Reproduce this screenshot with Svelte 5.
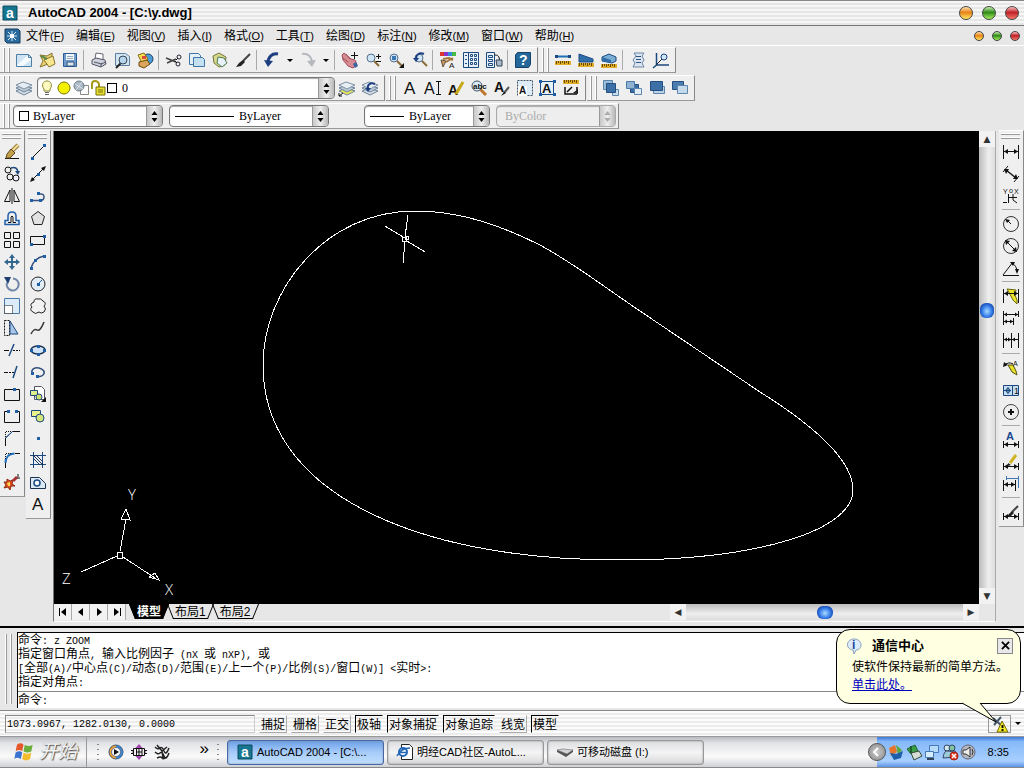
<script lang="ts">
  const l = (d: string, c = '#111', w = 1) => `<path d="${d}" fill="none" stroke="${c}" stroke-width="${w}"/>`;
  const f = (d: string, c: string, s = 'none') => `<path d="${d}" fill="${c}" stroke="${s}"/>`;
  const o = (x: number, y: number, r: number, c = 'none', s = '#111', w = 1) =>
    `<circle cx="${x}" cy="${y}" r="${r}" fill="${c}" stroke="${s}" stroke-width="${w}"/>`;
  const t = (x: number, y: number, size: number, s: string, c = '#111', w = 'normal') =>
    `<text x="${x}" y="${y}" font-size="${size}" font-weight="${w}" fill="${c}" font-family="Liberation Sans, sans-serif">${s}</text>`;

  const ink = '#1c4a80';
  const node = '#1f5fa8';
  const arrowsH = (y: number) => l(`M1 ${y}.5H15`) + f(`M1 ${y}.5l4-2.5v5zM15 ${y}.5l-4-2.5v5z`, '#111');
  const dots = (...pts: number[][]) => pts.map(([x, y]) => `<rect x="${x - 1}" y="${y - 1}" width="3" height="3" fill="${node}"/>`).join('');
  const lens = (x: number, y: number) =>
    l(`M${x + 3} ${y + 3}l5 5`, '#8a6a35', 2) + o(x, y, 4, '#cfe4f4', '#54708c');
  const ruler = (y: number) =>
    f(`M0 ${y}h16v4h-16z`, '#e0ae28') + l(`M1.5 ${y}v3M3.5 ${y}v2M5.5 ${y}v3M7.5 ${y}v2M9.5 ${y}v3M11.5 ${y}v2M13.5 ${y}v3`, '#6b4a00');
  const sheets = (c: string) => f('M0 11l7-3 9 3-8 4z', c, '#6d8296') + f('M0 8l7-3 9 3-8 4z', '#bccbd8', '#6d8296') + f('M0 5l7-3 9 3-8 4z', '#e6edf3', '#7b90a4');

  const icons: Record<string, string> = {
    new: f('M0.5 2.5h12l3 3v9h-15z', '#cfe3f2', '#4d7ea6') + f('M1 13L12 3v3h3v2L7 14H1z', '#f4fafd') + l('M12.5 2.5v3h3', '#4d7ea6'),
    open: f('M1 3l7 1 5-3v4l-4 7-8 3 3-6z', '#e8d070', '#8a7430') + f('M5 8l9-4 2 8-6 3z', '#f6e690', '#8a7430') + l('M2 4l6 3', '#5c8a48', 2),
    save: f('M1.5 1.5h13v13h-13z', '#6f9ccc', '#2f5c92') + f('M4 2h8v6H4z', '#f2f6fa') + f('M5 10h7v4H5z', '#dfe8f0', '#31557e') + l('M5 4.5h6M5 6.5h6', '#9ab'),
    print: f('M5 1l7 1v6l-8-1z', '#fff', '#667') + f('M1 8l4-2 9 2 1 4-5 3-9-3z', '#cdd2dc', '#556') + l('M3 10l8 2M10 15v-3l5-2', '#556'),
    preview: f('M1.5 1.5h10l4 3v9h-14z', '#d4e5f2', '#5d7f9e') + l('M7 11l-5 5', '#222', 2) + o(9, 8, 4, '#b6d6ee', '#345'),
    publish: o(11, 7, 5, '#4a9bd8', '#246') + f('M1 3l6-2 4 6-6 4z', '#f7df52', '#8a6a10') + f('M2 10l8-2 3 4-6 4-5-2z', '#dba65a', '#6c4a10') + f('M5 4h4v3H5z', '#d44'),
    cut: l('M0 6l10 4M1 11l9-4', '#444', 1.5) + o(13, 5, 2, 'none', '#223') + o(12, 12, 2, 'none', '#223') + l('M10 8l2-2M9 9l2 2'),
    copy: f('M0.5 1.5h9l2 2v9h-11z', '#e4f0f8', '#3f76a4') + f('M4.5 5.5h9l2 2v7h-11z', '#c4dff0', '#3f76a4'),
    paste: f('M1 4l6-3 7 4-1 8-6 2-5-4z', '#d8d88c', '#75753c') + f('M6 5l6 1 3 5-5 4-5-4z', '#e8f2fa', '#4f7d52'),
    brush: l('M15 2L8 9', '#444', 2) + f('M8 8l2 2-4 4-5 1 3-4z', '#222'),
    undo: l('M14 2C8 1 4 5 4 11', '#1d3f80', 3) + f('M0 8l4 7 5-6z', '#1d3f80'),
    redo: l('M2 2c6-1 10 3 10 9', '#b5b8bc', 2) + f('M16 8l-4 7-5-6z', '#b5b8bc'),
    pan: f('M0 3l2-2 7 6 4 1 2 5-4 3-5-2-5-6z', '#d58c92', '#a04f5c') + l('M4 2l4 5M1 6l5 4', '#a04f5c') + f('M11 12l3-2 2 4-3 2z', '#3763a0') + l('M12.5 0v7M9 3.5h7'),
    zoomrt: lens(6, 6) + l('M11 4.5h5M13.5 2v5M11 9.5h5'),
    zoomwin: lens(6, 6) + f('M4 4h4v4H4z', '#3c79b4') + f('M16 11v5h-5z', '#111'),
    zoomprev: lens(8, 6) + l('M13 2C8 0 5 3 5 7', '#1d3f80', 2) + f('M2 6h6l-3 4z', '#1d3f80'),
    props: f('M0 0h4v4H0z', '#d33') + f('M4 0h4v4H4z', '#83c') + f('M8 0h4v4H8z', '#38d') + f('M12 0h4v4h-4z', '#4b4') + l('M3 7l6-1 4 2M6 10l7-4', '#a5763a', 2) + f('M1 8l5 1-3 6z', '#c89a60', '#654') + t(9, 16, 8, 'A'),
    designcenter: f('M0.5 0.5h15v15h-15z', '#e8f1f9', ink) + l('M5.5 1v14', ink) + l('M2 3.5h2M2 7.5h2M2 11.5h2', ink) + l('M7.5 2.5h2v2h-2zM11.5 2.5h2v2h-2zM7.5 6.5h2v2h-2zM11.5 6.5h2v2h-2zM7.5 10.5h2v2h-2zM11.5 10.5h2v2h-2z', ink),
    palettes: f('M0.5 0.5h8v15h-8z', '#e8f1f9', ink) + l('M2.5 3.5h4v2h-4zM2.5 7.5h4v2h-4zM2.5 11.5h4v2h-4z', ink) + l('M9 3c4 0 5 3 4 7') + f('M10 8h6v6h-5z', '#aabaca', '#345'),
    help: f('M0.5 3l2-2.5h13v12l-2 3h-13z', '#24679b', '#164168') + t(4, 13, 14, '?', '#fff', 'bold'),
    dist: l('M1 4.5h14', '#1f6fb8', 2) + f('M0 3h3v3H0zM13 3h3v3h-3z', '#1c4a80') + ruler(9),
    area: f('M1 2l14 5v3H1z', '#2f6ea8', '#1c4a80') + ruler(11),
    mass: f('M1 5l7-3 7 3v4l-4 2L1 9z', '#79add6', '#1c4a80') + f('M1 5l9 3v3L1 9z', '#2f6ea8') + ruler(12),
    list: f('M4 1h10l-2 3 2 4-2 3 2 4H3l2-4-2-3 3-4z', '#dbe6f2', '#6b86a6') + l('M6 4.5h5M6 7.5h5M6 10.5h5', '#31557e'),
    locate: l('M3.5 1v12H16M3.5 13L0 16', '#1c4a80', 1.5) + l('M3 13L9 7', '#222') + o(11, 5, 3, '#cfe4f4', '#1c4a80'),
    layers: sheets('#d6e0e9'),
    layercur: sheets('#ecec50') + l('M0 16l4-3M0 16v-3M0 16h3'),
    layerprev: sheets('#d6e0e9') + l('M13 4c-5-2-8 1-7 5', '#1d3f80', 2) + f('M3 8h6l-3 4z', '#1d3f80'),
    bulb: f('M5 9C2 5 4 1 8 1s6 4 3 8v2H5z', '#fffac0', '#8a8630') + l('M6 12.5h4M6 14.5h4', '#666'),
    sun: o(8, 8, 6, '#f4f000', '#77770c'),
    freeze: f('M7.5 5.5h8v9h-8z', '#fff', '#888') + o(6, 6, 5, '#a9b9c4', '#6c7c88') + l('M2 4l8 5M9 2l-6 8', '#dde'),
    lock: l('M2 9V4q0-3 3-3t4 3v3', '#a59c18', 2) + f('M6 7h9v8H6z', '#e8e030', '#77700c') + l('M8 10h5M8 12h5', '#77700c'),
    mtext: t(2, 14, 17, 'A'),
    dtext: t(-1, 14, 16, 'A') + l('M11 1.5h5M11 14.5h5M13.5 2v12'),
    edittext: t(0, 15, 14, 'A', '#111', 'bold') + l('M15 2L8 14', '#c8a818', 3),
    findtext: l('M9 9l6 6', '#c0752c', 3) + o(6, 6, 5, '#d8ebf8', '#456') + t(2, 9, 8, 'abc', '#111', 'bold'),
    textstyle: t(0, 12, 14, 'A', '#111', 'bold') + l('M15 7l-5 6', '#555', 2) + f('M7 16l3-4 2 1z', '#111'),
    scaletext: '<rect x="0.5" y="0.5" width="15" height="15" fill="#dcebf6" stroke="#456" stroke-dasharray="2 1"/>' + f('M1 6h9v10H1z', '#fff') + t(2, 14, 10, 'A', '#111', 'bold'),
    justify: f('M0.5 1.5h13v13h-13z', '#e6f1fa', ink) + t(2, 13, 13, 'A', '#111', 'bold') + dots([0, 1], [14, 1], [0, 14], [14, 14]),
    spacetrans: ruler(0) + l('M2 7v7h12M4 12l5-5M14 7v5', '#111', 1.5) + f('M10 13l5-4v5z', '#222'),
    front: f('M0.5 0.5h9v9h-9z', '#9cbbd6', '#5d86ac') + f('M9.5 9.5h6v6h-6z', '#c9dcec', '#5d86ac') + f('M3.5 3.5h9v9h-9z', '#3d70a6', '#254f80'),
    back: f('M4.5 4.5h8v8h-8z', '#3d70a6', '#254f80') + f('M0.5 1.5h8v7h-8z', '#8fb2d2', '#4a7aa8') + f('M8.5 8.5h7v6h-7z', '#e2edf5', '#5d86ac'),
    above: f('M4.5 6.5h11v7h-11z', '#bcd2e6', '#5d86ac') + f('M1.5 1.5h12v9h-12z', '#3d70a6', '#254f80'),
    under: f('M0.5 1.5h11v8h-11z', '#4b7caf', '#254f80') + f('M5.5 5.5h10v8h-10z', '#c5dbec', '#5d86ac'),
    erase: l('M1 14.5h14') + l('M14 1L8 7', '#9a7a30', 4) + l('M14 1L8 7', '#eee0a0', 2) + f('M7 5l4 4-5 5H2l1-4z', '#c3a048', '#5c4820'),
    copyobj: o(4, 4, 3) + o(6, 11, 3) + o(12, 12, 3, '#eef') + l('M7 2q6-2 7 4', '#1c4a80', 1.5) + f('M11 5h5l-2 4z', '#1c4a80'),
    mirror: l('M8 0v16') + l('M6 2v11.5H0.5zM10 2v11.5h5.5z'),
    offset: l('M1 14.5h14v-4h-3V6q0-4-4-4T4 6v4.5H1z', '#1f5fa8', 1.5) + l('M4 12.5h3V7q1-2 2 0v5.5h3', '#111'),
    array: l('M0.5 0.5h6v6h-6zM9.5 0.5h6v6h-6zM0.5 9.5h6v6h-6zM9.5 9.5h6v6h-6z'),
    move: l('M8 2v12M2 8h12', '#35688f', 2) + f('M8 0l3 4H5zM8 16l3-4H5zM0 8l4-3v6zM16 8l-4-3v6z', '#35688f'),
    rotate: l('M9 2.5a6 6 0 1 1-6 4', '#6f86a8', 2) + f('M0 1l7 0-3 7z', '#1c3f70'),
    scale: f('M0.5 0.5h15v15h-15z', '#dcebf8', '#4a7aa8') + '<rect x="0.5" y="7.5" width="8" height="8" fill="#fff" stroke="#111" stroke-dasharray="1 1"/>',
    stretch: '<path d="M0.5 0.5h5v15h-5z" fill="#eee" stroke="#111" stroke-dasharray="2 1"/>' + f('M6 1l8 13H6z', '#a8c6e6', '#1c4a80'),
    trim: l('M0 8.5h5', '#111') + l('M10 2L5 14', '#1c4a80', 1.5) + '<path d="M9 8.5h7" stroke="#111" stroke-dasharray="2 1"/>',
    extend: l('M13 2L9 14', '#1c4a80', 1.5) + l('M0 8.5h4') + '<path d="M5 8.5h6" stroke="#111" stroke-dasharray="2 1"/>',
    breakpt: f('M0.5 3.5h15v11h-15z', '#ececec', '#111') + dots([10, 3]),
    break: l('M4 3.5H0.5v11h15v-11H12') + dots([4, 3], [12, 3]),
    chamfer: l('M1.5 16V8l7-6.5H16') + '<path d="M1.5 7V1.5H7" fill="none" stroke="#111" stroke-dasharray="1 1"/>' + l('M1.5 8l7-6.5', '#1f5fa8'),
    fillet: l('M1.5 16v-5M11 1.5h5') + l('M1.5 11q0-9 9-9.5', '#1f6fc0', 2) + '<path d="M1.5 7V1.5H7" fill="none" stroke="#111" stroke-dasharray="1 1"/>',
    explode: f('M0 8l3 0 0-3 3 2 3-1-1 4 3 2-4 0-1 4-2-3-4 1 2-3z', '#e04a20', '#8a2c10') + f('M3 9l3-1 0 4-2 0z', '#f9d84a') + l('M9 7l4-4', '#a33', 3) + l('M14 0v3M16 4h-3'),
    line: l('M2 14L14 2', '#111') + dots([2, 14], [14, 1]),
    xline: l('M1 15L15 1') + f('M0 16l2-5 3 3zM16 0l-2 5-3-3z', '#111') + dots([8, 8]),
    pline: l('M1 12.5h9q4 0 4-3.5t-4-3', '#35507c', 1.5) + dots([1, 12], [10, 12], [8, 5]),
    polygon: f('M8 1.5l6.5 5-2.5 8H4l-2.5-8z', '#e2e2e2', '#222'),
    rect: f('M0.5 4.5h14v8h-14z', '#eee', '#111') + dots([14, 4], [1, 12]),
    arc: l('M1 14Q4 4 14 2', '#35507c', 1.5) + dots([1, 14], [5, 6], [14, 2]),
    circle: o(8, 8, 7, '#e2edf6', '#222') + l('M8 8l4-4', '#1f5fa8') + dots([8, 8]),
    cloud: f('M4 4q0-4 4-3 3-1 5 2 4 2 1 5 3 3 0 6-3 2-5 0-4 3-6 0-4-2-1-5-3-3 2-5z', '#f2f2f2', '#222'),
    spline: l('M1 14q3-6 6-4t7-8', '#333', 1.5),
    ellipse: `<ellipse cx="8" cy="8" rx="7" ry="4" fill="#cfe3f4" stroke="#1c3350" stroke-width="1.5"/>` + dots([8, 4], [1, 8], [14, 8], [8, 12]),
    earc: l('M2 9C1 5 5 3 9 4s7 4 4 7-5 1-6 1', '#35507c', 1.5) + dots([2, 9], [7, 12]),
    insert: f('M4.5 0.5h7l3 3v10h-10z', '#fff', '#556') + f('M0.5 4.5h7v5h-7z', '#dff08a', '#1c4a80') + o(9, 11, 3, '#cfe26a', '#1c4a80') + f('M16 11v5h-5z', '#111'),
    block: f('M1.5 2.5h9v6h-9z', '#e9f08c', '#1c4a80') + o(10, 10, 4, '#d4e67a', '#1c4a80'),
    point: dots([8, 8]),
    hatch: f('M3 3h10v10H3z', '#e8eef4') + l('M3.5 0v16M12.5 0v16M0 3.5h16M0 12.5h16', '#1c4a80') + l('M3 6l7 7M3 3l10 10M6 3l7 7', '#1c3350'),
    region: f('M0.5 3.5h9l6 6v5h-15z', '#dbe9f5', '#1c3350') + o(7, 9, 3, '#f6fafd', '#1c4a80', 1.5),
    dimlin: l('M0.5 1v14M15.5 1v14') + arrowsH(7),
    dimali: l('M3 4l10 8', '#111', 1.5) + f('M1 3h5l-3 5zM15 13h-5l3-5z', '#111') + l('M0 6l5-6M11 16l5-6'),
    dimord: t(0, 6, 7, 'Y') + t(6, 5, 7, 'o') + t(11, 6, 7, 'X') + l('M5.5 6v9M5 9.5h9M10 6v6l4 3M0 14.5h4'),
    dimrad: o(8, 8, 7.5, 'none', '#333') + l('M8 8L4 4') + f('M2 3l5 1-3 3z', '#111'),
    dimdia: o(8, 8, 7.5, 'none', '#333') + l('M3 3l10 10') + f('M2 2l5 1-4 4zM14 14l-5-1 4-4z', '#111'),
    dimang: l('M0 15.5h16M0 15L10 2', '#111') + l('M9 3q5 3 5 9') + f('M7 2h5l-2 4zM12 9h4l-2 5z', '#111'),
    qdim: f('M4 1l9 1-1 5 2 5 0 4-4-4z', '#ece428', '#66640c') + l('M0.5 1v14M15.5 1v14') + arrowsH(5),
    dimbase: l('M0.5 1v14M10.5 8v7M15.5 1v6') + l('M1 4.5h14M1 11.5h9') + f('M1 4.5l3-2v4zM15 4.5l-3-2v4zM1 11.5l3-2v4zM10 11.5l-3-2v4z', '#111'),
    dimcont: l('M0.5 1v15M8.5 1v15M15.5 1v15M1 7.5h14') + f('M1 7.5l3-2v4zM8 7.5l-3-2v4zM9 7.5l3-2v4z', '#111'),
    leader: l('M1 6q4-5 9-2') + f('M0 7l1-5 4 3z', '#111') + f('M5 5h5l3 6 1 4-5-3z', '#e6de28', '#555310') + t(10, 6, 7, 'A'),
    tol: f('M0.5 3.5h15v10h-15z', '#c7def2', ink) + l('M9.5 4v9M5 5v7M1 8.5h7', ink) + o(5, 8.5, 2, 'none', ink) + t(11, 12, 9, '1'),
    center: o(8, 8, 7.5, 'none', '#444') + l('M8 5v6M5 8h6', '#111', 2),
    dimedit: t(3, 8, 11, 'A', '#1c4a90', 'bold') + l('M0.5 9v7M15.5 9v7') + arrowsH(12),
    dimtedit: l('M0.5 9v7M15.5 9v7') + arrowsH(12) + l('M13 1L7 9', '#d0b428', 3) + f('M5 9l3 2-3 1z', '#222'),
    dimupd: l('M0.5 4v11M12.5 4v11') + l('M3 2.5h12M3.5 0v4M15.5 0v12', '#3a78b8') + l('M1 8.5h11') + f('M1 8.5l4-2.5v5zM12 8.5l-4-2.5v5z', '#111'),
    dimstyle: l('M0.5 9v7M15.5 9v7') + arrowsH(12) + l('M15 2L9 8', '#444', 2) + f('M9 7l2 2-4 4-3-1z', '#222'),
    adlogo: f('M1 1h14v14H1z', '#16758f', '#0b4a5c') + t(4, 13, 14, 'a', '#fff', 'bold'),
    dwg: f('M1 1h13l2 2v12H3l-2-2z', '#2a6a9c', '#123c60') + l('M8 3v10M3 8h10M4 4l2 2M12 4l-2 2M4 12l2-2M12 12l-2-2', '#d4ecfa') + f('M6 6h4v4H6z', '#fff'),
    windows: f('M3 2q3-2 5 0L7 7Q5 5 2 7z', '#e2582c') + f('M9 2q3 2 6 0l-1 5q-3 2-6 0z', '#6cae3c') + f('M2 8q3-2 5 0l-1 5q-3-2-5 0z', '#3a72d0') + f('M8 8q3 2 6 0l-1 5q-3 2-6 0z', '#f2bc2c'),
    player: o(8, 8, 7, '#f0a030', '#456') + f('M8 1a7 7 0 0 1 0 14z', '#3a80c8') + o(8, 8, 4.5, '#f6f9fc', '#679') + f('M6 5l5 3-5 3z', '#111'),
    chip: f('M8 0l7 8-7 8-7-8z', '#a045b0') + f('M2.5 4.5h11v7h-11z', '#f4eef4', '#111') + l('M0 6.5h3M0 9.5h3M13 6.5h3M13 9.5h3M5 8h6') + l('M5.5 5v6M8 5v6M11 5v6'),
    snake: l('M1 3q3 3 5 1t4 3 5-3M1 8q3 3 5 1t4 3 5-3M3 14q4-2 5 0t6-2M3 1l5 6 1 7M13 3l-5 4', '#222', 1.5),
    ie: f('M4.5 0.5h8l3 3v12h-11z', '#fff', '#222') + o(6, 8, 4, '#fff', '#2468b8', 2) + l('M2 8.5h8M0 12Q4 4 13 4', '#2468b8', 1.5),
    disk: f('M0 6l6-1 10 1-6 4z', '#d4d4d4', '#999') + f('M0 6l10 4 6-4v2l-7 5L0 8z', '#555'),
    tray1: f('M1 4l6-3 2 7-6 4z', '#e8742c') + f('M8 1l6 5-4 5z', '#5aa83c') + f('M2 9l6 1 7-3-2 7-7 2z', '#1f5fa8'),
    tray2: f('M1 5l8-4 3 6-7 3z', '#3aa048', '#1c6030') + f('M5 9l8-2 3 5-8 4z', '#d6dcd6', '#354a38') + l('M5 2v7', '#1c6030', 2),
    tray3: f('M5.5 1.5h9v7h-9z', '#b6dcfa', '#4478b8') + f('M1.5 7.5h8v6h-8z', '#d4ecfc', '#4478b8') + l('M3 15h7', '#345', 2),
    tray4: o(5, 4, 3, '#cfe8ee', '#346') + o(10, 4, 3, '#7fc49c', '#346') + f('M1 14q1-8 5-7t6 0 3 6z', '#9ccbd8', '#346') + o(12, 12, 4, '#e03c28', '#a02010') + l('M10 10l4 4M14 10l-4 4', '#fff', 1.5),
    tray5: o(8, 8, 7, '#b4b8c0', '#667') + f('M3 6h3l4-3v10l-4-3H3z', '#eee', '#333') + l('M12 5q2 3 0 6', '#333'),
    satellite: l('M1 2l9 8M9 1L2 9', '#456', 2) + f('M10 5l6 11H5z', '#f6ec28', '#776c08') + l('M10.5 9v3M10.5 13v2', '#111', 2),
    info: f('M8 1c9 0 9 11 2 11l-2 4-1-4C-1 11 0 1 8 1z', '#dcebfa', '#8aa0bc') + t(6, 11, 12, 'i', '#1644a0', 'bold')
  };

  const menus = [
    ['文件', 'F'], ['编辑', 'E'], ['视图', 'V'], ['插入', 'I'], ['格式', 'O'], ['工具', 'T'],
    ['绘图', 'D'], ['标注', 'N'], ['修改', 'M'], ['窗口', 'W'], ['帮助', 'H']
  ];

  // '|' is a separator, 'v' the small drop-down arrow
  const standard = 'new open save | print preview publish | cut copy paste brush | undo v redo v | pan zoomrt zoomwin zoomprev | props designcenter palettes | help'.split(' ');
  const inquiry = 'dist area mass | list locate'.split(' ');
  const text = 'mtext dtext edittext findtext textstyle scaletext justify spacetrans'.split(' ');
  const order = 'front back above under'.split(' ');
  const modify = 'erase copyobj mirror offset array move rotate scale stretch trim extend breakpt break chamfer fillet explode'.split(' ');
  const draw = 'line xline pline polygon rect arc circle cloud spline ellipse earc insert block point hatch region mtext'.split(' ');
  const dimension = 'dimlin dimali dimord | dimrad dimdia dimang | qdim dimbase dimcont | leader tol center | dimedit dimtedit dimupd | dimstyle'.split(' ');

  const history = [
    '命令: z ZOOM',
    '指定窗口角点, 输入比例因子 (nX 或 nXP), 或',
    '[全部(A)/中心点(C)/动态(D)/范围(E)/上一个(P)/比例(S)/窗口(W)] <实时>:',
    '指定对角点:'
  ];

  let modes = $state([
    { name: '捕捉', on: false },
    { name: '栅格', on: false },
    { name: '正交', on: false },
    { name: '极轴', on: true },
    { name: '对象捕捉', on: true },
    { name: '对象追踪', on: true },
    { name: '线宽', on: false },
    { name: '模型', on: true }
  ]);

  const tasks = [
    { icon: 'adlogo', title: 'AutoCAD 2004 - [C:\\...', active: true },
    { icon: 'ie', title: '明经CAD社区-AutoL...', active: false },
    { icon: 'disk', title: '可移动磁盘 (I:)', active: false }
  ];

  let balloon = $state(true);
  let command = $state('');

  // split into runs so that latin text takes half the width of a hanzi
  const runs = (s: string) => s.match(/[\x20-\x7e]+|[^\x20-\x7e]+/g) ?? [];
</script>

{#snippet icon(name: string)}
  <svg class="icon" viewBox="0 0 16 16" aria-hidden="true">{@html icons[name]}</svg>
{/snippet}

{#snippet tools(items: string[])}
  {#each items as item}
    {#if item === '|'}
      <span class="sep"></span>
    {:else if item === 'v'}
      <button class="drop" aria-label="more"><i></i></button>
    {:else}
      <button class="tool" aria-label={item}>{@render icon(item)}</button>
    {/if}
  {/each}
{/snippet}

{#snippet spin()}
  <svg class="spin" viewBox="0 0 15 20" aria-hidden="true">
    <path d="M7.5 5l3 4h-6zM7.5 16l3-4h-6z" fill="currentColor" />
  </svg>
{/snippet}

{#snippet mixed(s: string)}{#each runs(s) as run}<span class:latin={/^[\x20-\x7e]/.test(run)}>{run}</span>{/each}{/snippet}

<div class="desktop">
  <header class="title">
    {@render icon('adlogo')}
    <h1>AutoCAD 2004 - [C:\y.dwg]</h1>
    <div class="lights">
      <button class="amber" aria-label="minimize"></button>
      <button class="green" aria-label="maximize"></button>
      <button class="red" aria-label="close"></button>
    </div>
  </header>

  <nav class="menubar">
    {@render icon('dwg')}
    {#each menus as [name, key]}
      <button>{name}<span>(<u>{key}</u>)</span></button>
    {/each}
    <div class="lights small">
      <button class="amber" aria-label="minimize"></button>
      <button class="green" aria-label="restore"></button>
      <button class="red" aria-label="close"></button>
    </div>
  </nav>

  <div class="row">
    <div class="bar">{@render tools(standard)}</div>
    <div class="bar">{@render tools(inquiry)}</div>
  </div>
  <div class="row">
    <div class="bar">
      {@render tools(['layers'])}
      <label class="combo layer">
        {@render icon('bulb')}{@render icon('sun')}{@render icon('freeze')}{@render icon('lock')}
        <span class="swatch"></span>
        <select aria-label="layer"><option>0</option></select>
        {@render spin()}
      </label>
      {@render tools(['layercur', 'layerprev'])}
    </div>
    <div class="bar">{@render tools(text)}</div>
    <div class="bar">{@render tools(order)}</div>
  </div>
  <div class="row">
    <div class="bar properties">
      <label class="combo color">
        <span class="swatch"></span>
        <select aria-label="color"><option>ByLayer</option></select>
        {@render spin()}
      </label>
      <label class="combo linetype">
        <span class="sample"></span>
        <select aria-label="linetype"><option>ByLayer</option></select>
        {@render spin()}
      </label>
      <label class="combo weight">
        <span class="sample"></span>
        <select aria-label="lineweight"><option>ByLayer</option></select>
        {@render spin()}
      </label>
      <label class="combo plot">
        <select aria-label="plot style" disabled><option>ByColor</option></select>
        {@render spin()}
      </label>
    </div>
  </div>

  <main>
    <div class="bar side">{@render tools(modify)}</div>
    <div class="bar side">{@render tools(draw)}</div>

    <div class="view">
      <div class="upper">
        <svg class="drawing" viewBox="54 131 925 473" role="img" aria-label="drawing">
          <g fill="none" stroke="#fff">
            <path d="M415 211C325 211 263 290 263 365C263 490 410 560 620 560C760 560 853 530 853 490C853 455 800 417 760 392L640 311C600 284 575 264 540 245C500 225 460 211 415 211z" />
            <path d="M408 215L405 237M385 226l18 11M407 241l18 11M405 242l-2 21M402.5 237.5h4v4h-4zM405.5 236.5h3v3h-3z" />
            <path d="M120 551l6-32M117 556l-36 16M123 557l32 21M117.5 552.5h5v6h-5zM126 509l-5 10 9 1zM159 580l-4-7-6 4z" />
          </g>
          <g class="axes">
            <text x="128" y="500">Y</text>
            <text x="165" y="595">X</text>
            <text x="62" y="584">Z</text>
          </g>
        </svg>
        <div class="scroll vertical">
          <button aria-label="up">▲</button>
          <span class="track"></span>
          <i class="thumb"></i>
          <span class="track rest"></span>
          <button aria-label="down">▼</button>
        </div>
      </div>
      <div class="lower">
        <div class="steps">
          <button aria-label="first"><svg viewBox="0 0 10 10"><path d="M1 1h1v8H1zM8 1v8L3 5z" /></svg></button>
          <button aria-label="previous"><svg viewBox="0 0 10 10"><path d="M7 1v8L2 5z" /></svg></button>
          <button aria-label="next"><svg viewBox="0 0 10 10"><path d="M3 1v8l5-4z" /></svg></button>
          <button aria-label="last"><svg viewBox="0 0 10 10"><path d="M8 1h1v8H8zM2 1v8l5-4z" /></svg></button>
        </div>
        <div class="tabs">
          <button class="current">模型</button>
          <button>布局1</button>
          <button>布局2</button>
        </div>
        <div class="scroll horizontal">
          <button aria-label="left">◀</button>
          <span class="track"></span>
          <i class="thumb"></i>
          <span class="track"></span>
          <button aria-label="right">▶</button>
        </div>
      </div>
    </div>

    <div class="bar side right">{@render tools(dimension)}</div>
  </main>

  <section class="command">
    <div class="console">
      <div class="log">
        {#each history as entry}
          <p>{@render mixed(entry)}</p>
        {/each}
      </div>
      <label class="prompt">
        <span>{@render mixed('命令:')}</span>
        <input bind:value={command} />
      </label>
    </div>
  </section>

  <footer class="status">
    <output>1073.0967, 1282.0130, 0.0000</output>
    {#each modes as mode}
      <button class:on={mode.on} onclick={() => (mode.on = !mode.on)}>{mode.name}</button>
    {/each}
    <div class="comm">
      <button class="sat" aria-label="communication center" onclick={() => (balloon = !balloon)}>{@render icon('satellite')}</button>
      <button class="drop" aria-label="more"><i></i></button>
      {#if balloon}
        <aside class="balloon">
          <div class="head">
            {@render icon('info')}
            <strong>通信中心</strong>
            <button aria-label="close" onclick={() => (balloon = false)}>
              <svg viewBox="0 0 10 10"><path d="M1 1l8 8M9 1L1 9" stroke="#000" stroke-width="2" /></svg>
            </button>
          </div>
          <p>使软件保持最新的简单方法。</p>
          <a href="#update">单击此处。</a>
          <svg class="tail" viewBox="0 0 36 24" aria-hidden="true">
            <path d="M0 0v1l34 19L18 1V0z" fill="#ffffe1" />
            <path d="M0 1l34 19L18 1" fill="none" stroke="#000" />
          </svg>
        </aside>
      {/if}
    </div>
  </footer>

  <div class="taskbar">
    <button class="start">{@render icon('windows')}<span>开始</span></button>
    <div class="quick">
      <span class="grip"></span>
      <button aria-label="player">{@render icon('player')}</button>
      <button aria-label="chip">{@render icon('chip')}</button>
      <button aria-label="snake">{@render icon('snake')}</button>
      <button class="chevron">»</button>
      <span class="grip"></span>
    </div>
    <div class="tasks">
      {#each tasks as task}
        <button class:active={task.active}>{@render icon(task.icon)}<span>{task.title}</span></button>
      {/each}
    </div>
    <div class="tray">
      <button class="hide" aria-label="hide icons">
        <svg viewBox="0 0 10 10"><path d="M6 1L2 5l4 4" fill="none" stroke="#fff" stroke-width="2" /></svg>
      </button>
      {#each ['tray1', 'tray2', 'tray3', 'tray4', 'tray5'] as name}
        {@render icon(name)}
      {/each}
      <time>8:35</time>
    </div>
  </div>
</div>

<style>
  :global(body) {
    margin: 0;
    overflow: hidden;
  }
  .desktop {
    display: flex;
    flex-direction: column;
    height: 100vh;
    background: #e7e7e7;
    color: #000;
    font-family: 'Liberation Sans', 'Noto Sans CJK SC', sans-serif;
    font-size: 12px;
    line-height: 14px;
  }
  .desktop > * {
    flex: none;
    box-sizing: border-box;
  }
  button {
    font: inherit;
    color: inherit;
    padding: 0;
    border: 0;
    background: none;
    white-space: nowrap;
  }
  p {
    margin: 0;
  }
  .icon {
    flex: none;
    display: block;
    width: 16px;
    height: 16px;
    overflow: visible;
  }

  .title {
    display: flex;
    align-items: center;
    gap: 10px;
    height: 26px;
    padding: 0 5px 0 2px;
    border-top: 1px solid #888;
    border-bottom: 1px solid #777;
    background: repeating-linear-gradient(#f6f6f6 0 2px, #e6e6e6 2px 4px);
  }
  .title h1 {
    flex: 1;
    margin: 0;
    font-size: 13px;
  }
  .lights {
    display: flex;
    gap: 9px;
  }
  .lights button {
    width: 14px;
    height: 14px;
    border: 1px solid #444;
    border-radius: 50%;
  }
  .lights.small {
    gap: 8px;
    margin-left: auto;
  }
  .lights.small button {
    width: 10px;
    height: 10px;
  }
  .lights .amber {
    background: linear-gradient(#ffe0b0, #e88418 45%, #ffe860);
  }
  .lights .green {
    background: linear-gradient(#c8f0b0, #2f8a18 45%, #a4f060);
  }
  .lights .red {
    background: linear-gradient(#ffc0c0, #c02028 45%, #f87868);
  }

  .menubar {
    display: flex;
    align-items: center;
    gap: 12px;
    height: 20px;
    padding: 0 4px;
    border-bottom: 1px solid #fff;
  }
  .menubar > button span {
    font-size: 11px;
  }
  .menubar > .icon {
    margin-right: -6px;
  }

  .row {
    display: flex;
    height: 28px;
    padding-top: 1px;
  }
  .bar {
    display: flex;
    align-items: center;
    box-sizing: border-box;
    height: 26px;
    margin-right: 1px;
    padding: 0 3px 0 12px;
    border-top: 1px solid #fff;
    border-right: 1px solid #888;
    border-bottom: 1px solid #999;
    background:
      linear-gradient(90deg, #fff 0 1px, #999 1px 2px, transparent 2px 5px, #fff 5px 6px, #999 6px 7px, transparent 7px) 3px 0 no-repeat,
      #efefef;
  }
  .tool {
    display: grid;
    place-items: center;
    width: 23px;
    height: 22px;
  }
  .sep {
    flex: none;
    width: 1px;
    height: 20px;
    margin: 0 3px 0 2px;
    background: #aaa;
  }
  .drop {
    display: grid;
    place-items: center;
    width: 13px;
    height: 20px;
  }
  .drop i {
    border: 3px solid transparent;
    border-top-color: #000;
    border-bottom: 0;
  }

  .combo {
    display: flex;
    align-items: center;
    box-sizing: border-box;
    height: 22px;
    padding-left: 5px;
    border: 1px solid #777;
    border-radius: 4px;
    background: #fff;
    box-shadow: inset 0 1px 1px #aaa;
    overflow: hidden;
  }
  .combo select {
    flex: 1;
    min-width: 0;
    appearance: none;
    padding: 0;
    border: 0;
    background: none;
    color: #000;
    font: 12px 'Liberation Serif', 'Noto Sans CJK SC', serif;
    opacity: 1;
  }
  .combo .swatch {
    flex: none;
    width: 8px;
    height: 8px;
    margin-right: 4px;
    border: 1px solid #000;
  }
  .combo .sample {
    height: 1px;
    margin-right: 5px;
    background: #000;
  }
  .spin {
    flex: none;
    width: 15px;
    height: 20px;
    background: linear-gradient(90deg, #c8c8c8, #eee, #b8b8b8);
    border-left: 1px solid #999;
  }
  .layer {
    gap: 1px;
    width: 298px;
    margin-left: 2px;
    padding-left: 1px;
  }
  .color {
    width: 150px;
  }
  .linetype {
    width: 160px;
  }
  .weight {
    width: 126px;
    margin-left: 29px;
  }
  .linetype .sample {
    width: 59px;
  }
  .weight .sample {
    width: 34px;
  }
  .plot {
    width: 120px;
    padding-left: 8px;
    border-color: #aaa;
    background: #eee;
    color: #aaa;
  }
  .plot select {
    color: #aaa;
  }
  .properties {
    gap: 6px;
    padding: 0 2px 0 13px;
  }

  main {
    display: flex;
    align-items: flex-start;
    min-height: 0;
  }
  .desktop > main {
    flex: 1 1 0;
  }
  .side {
    flex: none;
    flex-direction: column;
    width: 25px;
    height: auto;
    margin-right: 1px;
    padding: 10px 0 3px;
    background:
      linear-gradient(#fff 0 1px, #999 1px 2px, transparent 2px 4px, #fff 4px 5px, #999 5px 6px, transparent 6px) 2px 2px / 19px 8px no-repeat,
      #efefef;
  }
  .side .sep {
    width: 18px;
    height: 1px;
    margin: 2px 0 3px;
  }
  .right {
    margin: 0 0 0 3px;
  }
  .view {
    flex: 1;
    align-self: stretch;
    display: flex;
    flex-direction: column;
    min-width: 0;
    margin: 1px 0 0 1px;
    padding-bottom: 1px;
    border-left: 1px solid #777;
    border-right: 1px solid #aaa;
    border-bottom: 1px solid #fff;
  }
  .upper {
    flex: 1;
    display: flex;
    min-height: 0;
  }
  .drawing {
    flex: 1;
    min-width: 0;
    height: 100%;
    background: #000;
    shape-rendering: crispEdges;
  }
  .axes {
    fill: #fff;
    font: 15px 'Open Sans', sans-serif;
    font-weight: 300;
  }
  .scroll {
    display: flex;
    align-items: center;
  }
  .scroll button {
    flex: none;
    width: 16px;
    height: 16px;
    background: #f2f2f2;
    color: #333;
    font: 9px 'DejaVu Sans', sans-serif;
    text-align: center;
  }
  .vertical {
    flex-direction: column;
    width: 16px;
    background: linear-gradient(90deg, #bbb, #eee 60%, #ddd);
  }
  .track {
    flex: 155;
  }
  .track.rest {
    flex: 267;
  }
  .thumb {
    flex: none;
    width: 14px;
    height: 15px;
    border-radius: 6px;
    background: radial-gradient(ellipse at 50% 55%, #a8dcff, #3c82ec 45%, #0c3fa8 80%);
  }
  .lower {
    display: flex;
    height: 16px;
  }
  .steps {
    display: flex;
  }
  .steps button {
    display: grid;
    place-items: center;
    width: 18px;
    border-right: 1px solid #aaa;
    box-sizing: border-box;
    background: #f2f2f2;
  }
  .steps svg {
    width: 10px;
    height: 10px;
  }
  .tabs {
    display: flex;
    flex: 1;
    gap: 14px;
    padding-left: 11px;
  }
  .tabs button {
    position: relative;
    z-index: 0;
    height: 15px;
    line-height: 14px;
  }
  /* two skewed halves, overlapping in the middle, make the slanted sheet tab */
  .tabs button::before,
  .tabs button::after {
    content: '';
    position: absolute;
    z-index: -1;
    top: 0;
    bottom: 0;
    border-bottom: 1px solid #000;
  }
  .tabs button::before {
    left: -5px;
    right: 8px;
    border-left: 1px solid #000;
    transform: skewX(22deg);
  }
  .tabs button::after {
    left: 8px;
    right: -5px;
    border-right: 1px solid #000;
    transform: skewX(-22deg);
  }
  .tabs .current {
    color: #fff;
    font-weight: bold;
  }
  .tabs .current::before,
  .tabs .current::after {
    background: #000;
  }
  .horizontal {
    width: 309px;
    background: linear-gradient(#bbb, #eee 60%, #ddd);
    margin-right: 16px;
  }
  .horizontal .thumb {
    width: 16px;
    height: 13px;
  }

  .command {
    margin-top: 4px;
    padding: 4px 0 2px 17px;
    border-top: 2px solid #000;
    background: linear-gradient(90deg, #fff 0 1px, #999 1px 2px, transparent 2px 5px, #fff 5px 6px, #999 6px 7px, transparent 7px) 5px 6px / 8px 70px no-repeat;
  }
  .console {
    border-top: 1px solid #000;
    border-left: 1px solid #000;
    background: #fff;
  }
  .log {
    height: 58px;
    border-bottom: 1px solid #888;
  }
  .log p {
    height: 14px;
    white-space: pre;
  }
  .latin {
    font-family: 'Liberation Mono', monospace;
    font-size: 10px;
    line-height: 1;
    white-space: pre;
  }
  .prompt {
    display: flex;
    align-items: center;
    height: 16px;
  }
  .prompt input {
    flex: 1;
    height: 14px;
    padding: 0;
    border: 0;
    outline: 0;
    background: none;
    font: inherit;
  }

  .status {
    display: flex;
    align-items: center;
    gap: 4px;
    height: 27px;
    padding-left: 5px;
    border-top: 1px solid #888;
    border-bottom: 1px solid #999;
    background: repeating-linear-gradient(#fcfcfc 0 2px, #ececec 2px 4px);
  }
  .status output {
    box-sizing: border-box;
    width: 250px;
    height: 18px;
    padding-left: 1px;
    border: 1px solid;
    border-color: #888 #ccc #ccc #888;
    font: 10px/18px 'Liberation Mono', monospace;
  }
  .status > button {
    height: 18px;
    padding: 0 1px;
    border: 1px solid;
    border-color: transparent #aaa #aaa transparent;
    line-height: 18px;
  }
  .status > .on {
    border-color: #000 transparent transparent #000;
  }
  .comm {
    position: relative;
    display: flex;
    align-items: center;
    margin-left: auto;
  }
  .sat {
    display: grid;
    place-items: center;
    width: 23px;
    height: 18px;
    border: 1px solid #999;
  }
  .balloon {
    position: absolute;
    right: 3px;
    bottom: 30px;
    box-sizing: border-box;
    width: 185px;
    height: 75px;
    padding: 7px 7px 0 15px;
    border: 1px solid #000;
    border-radius: 14px;
    background: #ffffe1;
  }
  .head {
    display: flex;
    align-items: center;
    gap: 10px;
    height: 18px;
    margin: 0 0 5px -6px;
  }
  .head strong {
    flex: 1;
    font-size: 13px;
  }
  .head button {
    display: grid;
    place-items: center;
    width: 16px;
    height: 16px;
    border: 1px solid #888;
    background: #e8e8e8;
  }
  .head button svg {
    width: 9px;
    height: 9px;
  }
  .balloon p {
    margin-bottom: 4px;
    white-space: nowrap;
  }
  .balloon a {
    color: #0000c0;
  }
  .tail {
    position: absolute;
    right: 22px;
    top: 72px;
    width: 36px;
    height: 24px;
  }

  .taskbar {
    display: flex;
    align-items: center;
    height: 31px;
    border-bottom: 1px solid #888;
    background: linear-gradient(#b8bac2, #e2e3e6 20%, #fafafa 65%, #d0d1d6);
  }
  .start {
    display: flex;
    align-items: center;
    gap: 5px;
    align-self: stretch;
    width: 87px;
    box-sizing: border-box;
    padding-left: 13px;
    border-right: 1px solid #999;
  }
  .start .icon {
    width: 21px;
    height: 21px;
  }
  .start span {
    color: #f4f4f4;
    font-size: 19px;
    font-style: italic;
    line-height: 24px;
    text-shadow: 1px 1px 1px #555, 0 0 1px #888;
  }
  .quick {
    display: flex;
    align-items: center;
    gap: 7px;
    width: 140px;
    box-sizing: border-box;
    padding: 0 6px 0 9px;
  }
  .quick .grip {
    flex: none;
    width: 4px;
    height: 20px;
    margin-right: 1px;
    background: radial-gradient(circle, #888 1px, transparent 1px) 0 0 / 4px 5px;
  }
  .chevron {
    margin-left: auto;
    font-size: 17px;
    align-self: flex-start;
  }
  .tasks {
    display: flex;
    flex: 1;
    gap: 3px;
    min-width: 0;
  }
  .tasks button {
    display: flex;
    align-items: center;
    gap: 4px;
    box-sizing: border-box;
    width: 157px;
    height: 25px;
    padding-left: 9px;
    border: 1px solid #999;
    border-radius: 3px;
    background: linear-gradient(#dcdde0, #f4f4f4 50%, #d8d8dc);
    box-shadow: inset 0 0 2px #888;
    font-size: 11px;
  }
  .tasks .active {
    border-color: #4468a8;
    background: linear-gradient(#6ca0e8, #a8ccfa 50%, #c0e0ff);
  }
  .tray {
    display: flex;
    align-items: center;
    align-self: stretch;
    gap: 2px;
    box-sizing: border-box;
    width: 147px;
    padding-right: 15px;
    background: linear-gradient(#3c78d8, #86b8f8 15%, #a8d0ff 80%, #5c94e4);
  }
  .tray .hide {
    flex: none;
    display: grid;
    place-items: center;
    width: 18px;
    height: 18px;
    margin-left: -9px;
    border: 1px solid #555;
    border-radius: 50%;
    background: radial-gradient(#ccc, #888);
  }
  .hide svg {
    width: 10px;
    height: 10px;
  }
  .tray time {
    margin-left: auto;
    font-size: 11px;
  }
</style>
